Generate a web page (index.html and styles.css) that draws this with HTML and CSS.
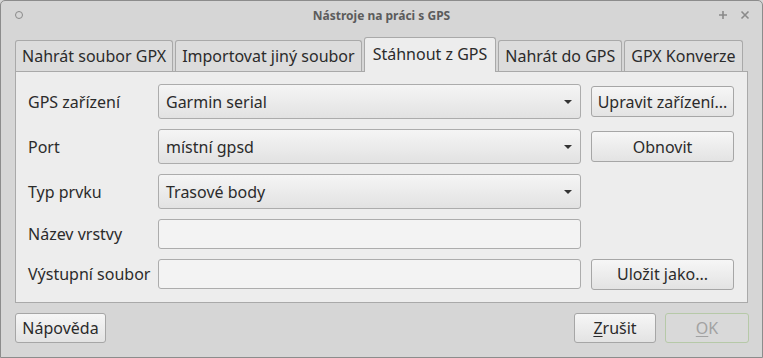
FILE: index.html
```html
<!DOCTYPE html>
<html lang="cs">
<head>
<meta charset="utf-8">
<title>Nástroje na práci s GPS</title>
<link rel="stylesheet" href="styles.css">
</head>
<body>
<div class="window">
  <div class="titlebar">
    <span class="menu-dot"></span>
    <span class="title">Nástroje na práci s GPS</span>
    <span class="wm-btns">
      <svg class="wm-icon" width="10" height="10" viewBox="0 0 10 10"><path d="M5 1v8M1 5h8" stroke="#8a8a8a" stroke-width="1.6"/></svg>
      <svg class="wm-icon" width="10" height="10" viewBox="0 0 10 10"><path d="M1.5 1.5l7 7M8.5 1.5l-7 7" stroke="#8a8a8a" stroke-width="1.6"/></svg>
    </span>
  </div>
  <div class="body">
    <div class="tabs">
      <div class="tab">Nahrát soubor GPX</div>
      <div class="tab">Importovat jiný soubor</div>
      <div class="tab active">Stáhnout z GPS</div>
      <div class="tab">Nahrát do GPS</div>
      <div class="tab">GPX Konverze</div>
    </div>
    <div class="panel">
      <div class="form">
        <div class="label">GPS zařízení</div>
        <div class="combo"><span>Garmin serial</span><span class="arrow"></span></div>
        <div class="btn side">Upravit zařízení...</div>

        <div class="label">Port</div>
        <div class="combo"><span>místní gpsd</span><span class="arrow"></span></div>
        <div class="btn side">Obnovit</div>

        <div class="label">Typ prvku</div>
        <div class="combo"><span>Trasové body</span><span class="arrow"></span></div>
        <div></div>

        <div class="label">Název vrstvy</div>
        <div class="field"></div>
        <div></div>

        <div class="label">Výstupní soubor</div>
        <div class="field"></div>
        <div class="btn side">Uložit jako...</div>
      </div>
    </div>
    <div class="footer">
      <div class="btn help">Nápověda</div>
      <div class="spacer"></div>
      <div class="btn cancel"><u>Z</u>rušit</div>
      <div class="btn ok disabled"><u>O</u>K</div>
    </div>
  </div>
</div>
</body>
</html>
```
FILE: styles.css
```css
* { box-sizing: border-box; }
html, body {
  margin: 0;
  padding: 0;
  width: 763px;
  height: 358px;
  overflow: hidden;
  background: #d6d6d6;
}
body {
  font-family: "Noto Sans", "Open Sans", sans-serif;
  font-size: 16px;
  color: #2b2b2b;
}
.window {
  width: 763px;
  height: 358px;
  border: 1px solid #8c8c8c;
  border-radius: 5px 5px 0 0;
  background: #d6d6d6;
  display: flex;
  flex-direction: column;
}
.titlebar {
  height: 28px;
  display: flex;
  align-items: center;
  padding: 0 12px 0 14px;
}
.menu-dot {
  width: 8px;
  height: 8px;
  border: 1.5px solid #8a8a8a;
  border-radius: 50%;
}
.title {
  flex: 1;
  text-align: center;
  font-size: 12px;
  font-weight: bold;
  color: #5c5c5c;
  padding-left: 22px;
}
.wm-btns {
  display: flex;
  gap: 12px;
  align-items: center;
}
.body {
  padding: 8px 14px 0 14px;
  display: flex;
  flex-direction: column;
}
.tabs {
  display: flex;
  align-items: flex-end;
  gap: 2px;
  height: 34px;
  position: relative;
  z-index: 1;
}
.tab {
  height: 31px;
  padding: 0 6px;
  border: 1px solid #a9a9a9;
  border-bottom: none;
  border-radius: 3px 3px 0 0;
  background: #dcdcdc;
  display: flex;
  align-items: center;
  line-height: 1;
  white-space: nowrap;
}
.tab.active {
  height: 35px;
  background: #ededed;
  margin-bottom: -1px;
  padding: 0 8px 2px 8px;
}
.panel {
  width: 733px;
  height: 232px;
  border: 1px solid #a9a9a9;
  background: #ededed;
  padding: 12px 13px 0 12px;
}
.form {
  display: grid;
  grid-template-columns: 120px 423px 143px;
  column-gap: 10px;
  row-gap: 10px;
  grid-template-rows: 35px 35px 35px 30px 30px;
  align-items: center;
}
.label {
  white-space: nowrap;
}
.combo {
  height: 35px;
  border: 1px solid #acacac;
  border-radius: 3px;
  background: linear-gradient(#f5f5f5, #e2e2e2);
  display: flex;
  align-items: center;
  justify-content: space-between;
  padding: 0 8px 0 7px;
}
.arrow {
  width: 0;
  height: 0;
  border-left: 4px solid transparent;
  border-right: 4px solid transparent;
  border-top: 4px solid #333;
}
.field {
  height: 30px;
  border: 1px solid #acacac;
  border-radius: 3px;
  background: #f3f3f3;
}
.btn {
  height: 31px;
  border: 1px solid #a6a6a6;
  border-radius: 3px;
  background: linear-gradient(#f6f6f6, #e3e3e3);
  display: flex;
  align-items: center;
  justify-content: center;
  white-space: nowrap;
}
.btn u { text-decoration-thickness: 1px; text-underline-offset: 2px; }
.footer {
  display: flex;
  gap: 9px;
  margin-top: 10px;
  width: 734px;
}
.footer .btn { height: 30px; }
.spacer { flex: 1; }
.help { width: 91px; }
.cancel { width: 82px; }
.ok { width: 84px; }
.disabled {
  background: #d9d9d9;
  border-color: #b6c9a8;
  color: #a2a2a2;
}
```
